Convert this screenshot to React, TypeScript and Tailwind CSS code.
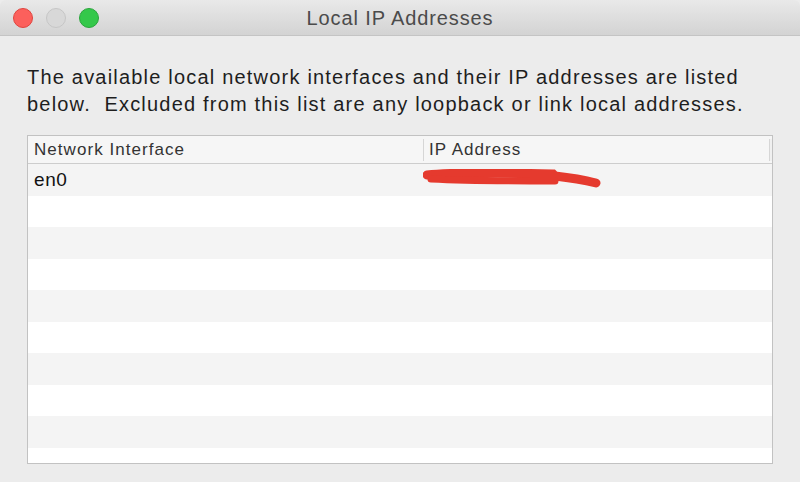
const rows = Array.from({length: 10}, (_, i) => i);

function TrafficLight({color, border}: {color: string; border: string}) {
    return <span className={`block w-[20px] h-[20px] rounded-full border ${color} ${border}`}/>;
}

function Scribble() {
    return (
        <svg width="180" height="24" viewBox="0 0 180 24" className="absolute left-[-2px] top-[5px]">
            <path
                d="M4 6 C 30 3, 90 4, 130 5 L 132 7 C 150 9, 165 12, 173 14"
                stroke="#e53a2e"
                strokeWidth="9"
                strokeLinecap="round"
                fill="none"
            />
            <path d="M8 10 C 50 12, 100 12, 132 12" stroke="#e53a2e" strokeWidth="7" strokeLinecap="round" fill="none"/>
        </svg>
    );
}

export default function App() {
    return (
        <div className="w-[800px] h-[482px] bg-[#ececec] flex flex-col overflow-hidden" style={{fontFamily: '"Liberation Sans", Arial, sans-serif'}}>
            <div className="relative h-[36px] shrink-0 flex items-center justify-center bg-gradient-to-b from-[#e9e9e9] to-[#d3d3d3] border-b border-[#c4c4c4] rounded-t-[6px]">
                <div className="absolute left-[13px] top-[8px] flex gap-[13px]">
                    <TrafficLight color="bg-[#fc605c]" border="border-[#e0443e]"/>
                    <TrafficLight color="bg-[#d8d8d8]" border="border-[#c6c6c6]"/>
                    <TrafficLight color="bg-[#34c84a]" border="border-[#2aa53c]"/>
                </div>
                <span className="text-[20px] text-[#4b4b4b] leading-none tracking-[0.9px]">Local IP Addresses</span>
            </div>

            <div className="flex-1 flex flex-col px-[27px] pt-[28px]">
                <p className="text-[20px] leading-[27px] text-[#1e1e1e] tracking-[1.2px] whitespace-pre">
                    {"The available local network interfaces and their IP addresses are listed\nbelow.  Excluded from this list are any loopback or link local addresses."}
                </p>

                <div className="mt-[17px] w-[746px] h-[329px] border border-[#c2c2c2] bg-white flex flex-col overflow-hidden">
                    <div className="h-[28px] shrink-0 flex items-center bg-[#f6f6f6] border-b border-[#cdcdcd] text-[17px] text-[#333] tracking-[1.05px]">
                        <div className="w-[396px] pl-[6px] border-r border-[#d6d6d6] h-[22px] flex items-center">Network Interface</div>
                        <div className="flex-1 pl-[5px] flex items-center">IP Address</div>
                        <div className="w-[3px] h-[22px] border-l border-[#d6d6d6] bg-[#f0f0f0]"/>
                    </div>
                    {rows.map(i => (
                        <div key={i} className={`h-[31.5px] shrink-0 flex items-center text-[19px] text-[#111] tracking-[0.6px] ${i % 2 === 0 ? "bg-[#f4f4f4]" : "bg-white"}`}>
                            {i === 0 && <>
                                <div className="w-[397px] pl-[6px]">en0</div>
                                <div className="relative flex-1 h-full">
                                    <Scribble/>
                                </div>
                            </>}
                        </div>
                    ))}
                </div>
            </div>
        </div>
    );
}
